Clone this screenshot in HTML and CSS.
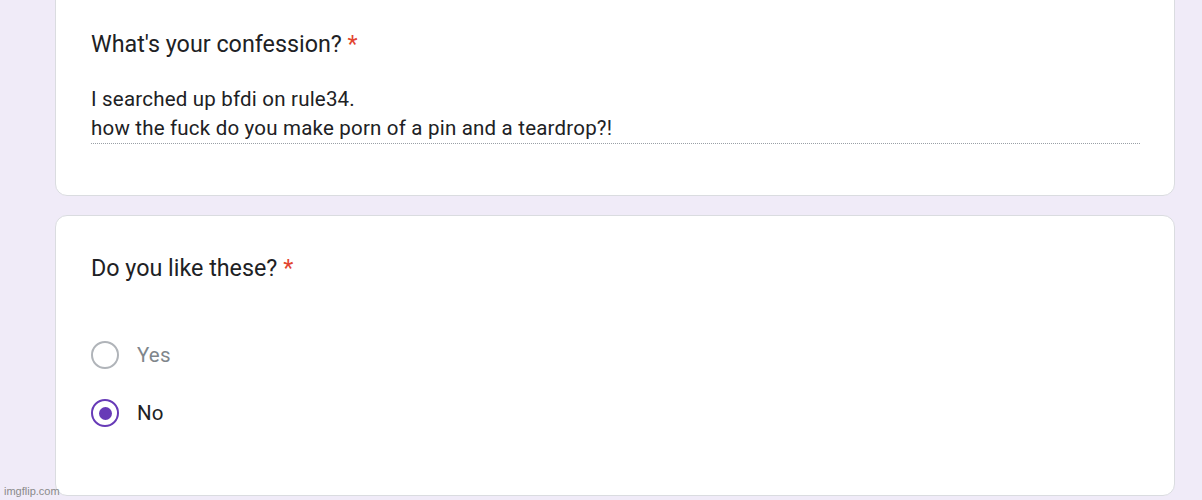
FILE: index.html
```html
<!DOCTYPE html>
<html>
<head>
<meta charset="utf-8">
<link rel="stylesheet" href="styles.css">
</head>
<body>
<div class="page">
  <div class="card card-first">
    <div class="q-title">What's your confession? <span class="req">*</span></div>
    <div class="answer">I searched up bfdi on rule34.<br>how the fuck do you make porn of a pin and a teardrop?!</div>
  </div>
  <div class="card card-second">
    <div class="q-title">Do you like these? <span class="req">*</span></div>
    <div class="options">
      <div class="option">
        <span class="radio"></span>
        <span class="label label-off">Yes</span>
      </div>
      <div class="option">
        <span class="radio radio-on"><span class="dot"></span></span>
        <span class="label">No</span>
      </div>
    </div>
  </div>
</div>
<div class="watermark">imgflip.com</div>
</body>
</html>
```
FILE: styles.css
```css
html, body {
  margin: 0;
  padding: 0;
  background: #f0ebf8;
  height: 500px;
  overflow: hidden;
}
body {
  font-family: Roboto, "Liberation Sans", Arial, sans-serif;
  color: #202124;
  position: relative;
}
.page {
  padding-left: 55px;
  width: 1120px;
  display: flex;
  flex-direction: column;
  gap: 19px;
}
.card {
  background: #fff;
  border: 1px solid #dadce0;
  border-radius: 12px;
  box-sizing: border-box;
  padding-left: 35px;
  padding-right: 34px;
}
.card-first {
  margin-top: -12px;
  padding-top: 40px;
  height: 208px;
}
.card-second {
  padding-top: 37px;
  height: 281px;
}
.q-title {
  font-size: 23.3px;
  line-height: 30px;
  height: 30px;
}
.req {
  color: #e2442f;
}
.answer {
  margin-top: 26px;
  font-size: 20.5px;
  letter-spacing: 0.2px;
  line-height: 29px;
  border-bottom: 1px dotted #9aa0a6;
}
.options {
  margin-top: 43px;
  display: flex;
  flex-direction: column;
}
.option {
  height: 58px;
  display: flex;
  align-items: center;
  gap: 18px;
}
.radio {
  width: 28px;
  height: 28px;
  box-sizing: border-box;
  border: 2.5px solid #b0b4b9;
  border-radius: 50%;
  display: flex;
  align-items: center;
  justify-content: center;
  flex-shrink: 0;
}
.radio-on {
  border-color: #673ab7;
}
.dot {
  width: 13px;
  height: 13px;
  border-radius: 50%;
  background: #673ab7;
}
.label {
  font-size: 20.5px;
  letter-spacing: 0.2px;
  color: #202124;
}
.label-off {
  color: #80868b;
}
.watermark {
  position: absolute;
  left: 4px;
  top: 485px;
  font-family: "Liberation Sans", Arial, sans-serif;
  font-size: 11px;
  color: #8a8a8a;
}
```
